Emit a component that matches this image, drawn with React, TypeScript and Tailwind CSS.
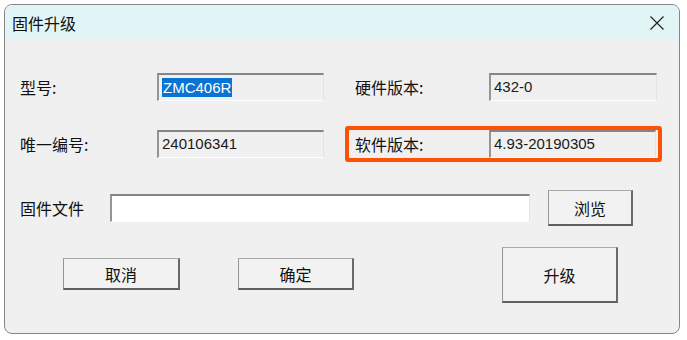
import React from 'react';

const cjk = "font-['Noto_Sans_CJK_SC',sans-serif]";
const latin = "font-['Liberation_Sans','Noto_Sans_CJK_SC',sans-serif]";

const sunken =
  'h-[28px] flex items-center pl-[3px] border-t-2 border-l-2 border-t-[#858585] border-l-[#959595] border-b border-r border-b-white border-r-[#e3e3e3]';

const raised =
  'flex items-center justify-center bg-[#f2f2f2] border-t border-l border-t-[#a8a8a8] border-l-[#969696] border-b-2 border-r-2 border-b-[#5f5f5f] border-r-[#6a6a6a] text-[16px] text-[#111]';

const ReadOnlyBox: React.FC<{ value: string; width: string; selected?: boolean }> = ({ value, width, selected }) => (
  <div className={`${sunken} ${width} bg-[#f0f0f0] ${latin} text-[15px] text-[#1a1a1a]`}>
    {selected ? <span className="bg-[#0a74d4] text-white leading-[19px] px-[1px]">{value}</span> : <span>{value}</span>}
  </div>
);

export default function App() {
  return (
    <div className="w-[687px] h-[340px] bg-white pt-[4px] pl-[4px]">
      <div className={`w-[676px] h-[330px] border border-[#858585] rounded-[8px] overflow-hidden bg-[#f0f0f0] ${cjk}`}>
        {/* title bar */}
        <div className="h-[35px] bg-[#e2f5f6] flex items-center justify-between pl-[7px] pr-[14px]">
          <span className="text-[16px] text-[#111]">固件升级</span>
          <svg width="16" height="16" viewBox="0 0 16 16" className="text-[#222]">
            <path d="M1.5 1.5 L14.5 14.5 M14.5 1.5 L1.5 14.5" stroke="currentColor" strokeWidth="1.2" fill="none" />
          </svg>
        </div>

        <div className="pl-[15px]">
          {/* row 1 */}
          <div className="flex items-center mt-[33px]">
            <span className="w-[137px] text-[16px] text-[#111]">型号:</span>
            <ReadOnlyBox value="ZMC406R" width="w-[167px]" selected />
            <span className="ml-[31px] w-[134px] text-[16px] text-[#111]">硬件版本:</span>
            <ReadOnlyBox value="432-0" width="w-[168px]" />
          </div>

          {/* row 2 */}
          <div className="flex items-center mt-[25px]">
            <span className="w-[137px] text-[16px] text-[#111]">唯一编号:</span>
            <ReadOnlyBox value="240106341" width="w-[167px]" />
            <div className="ml-[21px] flex items-center border-4 border-[#ff5200] rounded-[3px] pr-[2px]">
              <span className="w-[140px] pl-[6px] text-[16px] text-[#111]">软件版本:</span>
              <ReadOnlyBox value="4.93-20190305" width="w-[167px]" />
            </div>
          </div>

          {/* row 3 */}
          <div className="flex items-center mt-[28px]">
            <span className="w-[90px] text-[16px] text-[#111]">固件文件</span>
            <div className={`${sunken} w-[420px] bg-white`} />
            <button className={`${raised} ml-[18px] w-[85px] h-[36px]`}>浏览</button>
          </div>

          {/* row 4 */}
          <div className="flex items-start mt-[21px]">
            <button className={`${raised} ml-[43px] mt-[11px] w-[117px] h-[32px]`}>取消</button>
            <button className={`${raised} ml-[58px] mt-[11px] w-[116px] h-[32px]`}>确定</button>
            <button className={`${raised} ml-[148px] w-[116px] h-[56px]`}>升级</button>
          </div>
        </div>
      </div>
    </div>
  );
}
